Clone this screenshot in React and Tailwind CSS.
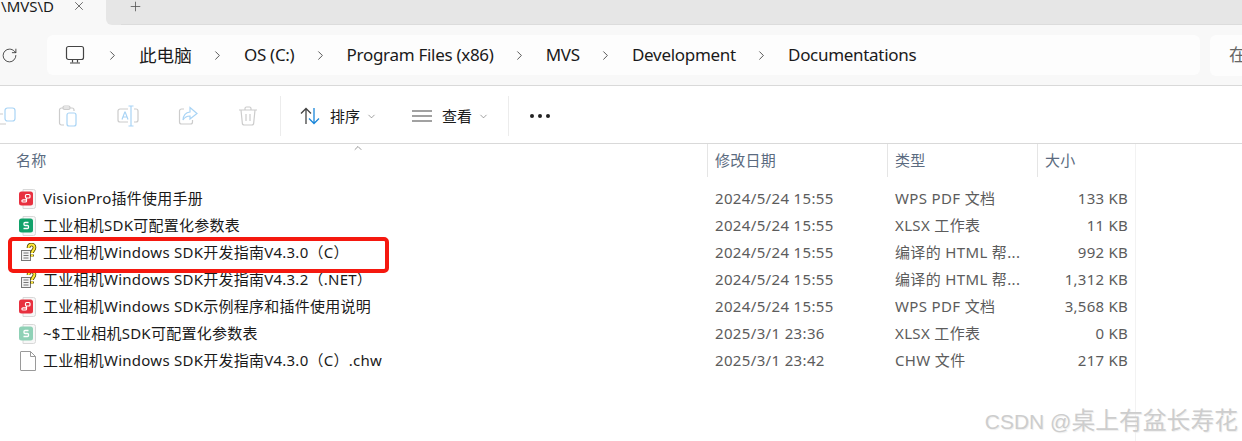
import { ChevronRight, ChevronDown, ChevronUp, X, Plus, RotateCw } from 'lucide-react';

const FONT = '"Noto Sans", "Noto Sans CJK SC", sans-serif';

const crumbs = ['OS (C:)', 'Program Files (x86)', 'MVS', 'Development', 'Documentations'];

const files = [
  { icon: 'pdf', name: 'VisionPro插件使用手册', date: '2024/5/24 15:55', type: 'WPS PDF 文档', size: '133 KB' },
  { icon: 'xlsx', name: '工业相机SDK可配置化参数表', date: '2024/5/24 15:55', type: 'XLSX 工作表', size: '11 KB' },
  { icon: 'chm', name: '工业相机Windows SDK开发指南V4.3.0（C）', date: '2024/5/24 15:55', type: '编译的 HTML 帮...', size: '992 KB' },
  { icon: 'chm', name: '工业相机Windows SDK开发指南V4.3.2（.NET）', date: '2024/5/24 15:55', type: '编译的 HTML 帮...', size: '1,312 KB' },
  { icon: 'pdf', name: '工业相机Windows SDK示例程序和插件使用说明', date: '2024/5/24 15:55', type: 'WPS PDF 文档', size: '3,568 KB' },
  { icon: 'temp', name: '~$工业相机SDK可配置化参数表', date: '2025/3/1 23:36', type: 'XLSX 工作表', size: '0 KB' },
  { icon: 'blank', name: '工业相机Windows SDK开发指南V4.3.0（C）.chw', date: '2025/3/1 23:42', type: 'CHW 文件', size: '217 KB' },
];

function Monitor() {
  return (
    <svg width="20" height="20" viewBox="0 0 20 20" fill="none" stroke="#444" strokeWidth="1.2">
      <rect x="1.5" y="1.5" width="17" height="13" rx="2" />
      <path d="M7.5 15v2.2M12.5 15v2.2M5 18h10" />
    </svg>
  );
}

function CopyIcon() {
  return (
    <svg width="20" height="20" viewBox="0 0 20 20" fill="none" strokeWidth="1.2" className="shrink-0">
      <path d="M8 18H2a2 2 0 0 1-2-2V8M2 8h3" stroke="#ccc" />
      <rect x="7" y="2" width="10" height="13" rx="2.5" stroke="#a9d4f5" />
    </svg>
  );
}

function PasteIcon() {
  return (
    <svg width="20" height="22" viewBox="0 0 20 22" fill="none" strokeWidth="1.2">
      <path d="M6 20H3.5A2 2 0 0 1 1.500 18V5A2 2 0 0 1 3.500 3H14A2 2 0 0 1 16 5V6" stroke="#ccc" />
      <rect x="5" y="1" width="7" height="3.500" rx="1.500" stroke="#ccc" />
      <rect x="9" y="8" width="9" height="13" rx="2" stroke="#a9d4f5" />
    </svg>
  );
}

function RenameIcon() {
  return (
    <svg width="22" height="22" viewBox="0 0 22 22" fill="none" strokeWidth="1.2">
      <path d="M11 4H3a2 2 0 0 0-2 2v9a2 2 0 0 0 2 2h8M17 4h2a2 2 0 0 1 2 2v9a2 2 0 0 1-2 2h-2" stroke="#ccc" />
      <path d="M11.500 1h5M14 1v20M11.500 21h5M5 14.500l2.800-7.500h.4l2.800 7.500M6 12h4" stroke="#a9d4f5" />
    </svg>
  );
}

function ShareIcon() {
  return (
    <svg width="20" height="20" viewBox="0 0 20 20" fill="none" strokeWidth="1.2">
      <path d="M6 3H3.500a2 2 0 0 0-2 2v11a2 2 0 0 0 2 2h9a2 2 0 0 0 2-2v-2" stroke="#ccc" />
      <path d="M12 1.500l7 6-7 5.500V10c-3.500 0-5.500 1.500-7 4 .3-4.500 3-7.500 7-8z" stroke="#a9d4f5" />
    </svg>
  );
}

function TrashIcon() {
  return (
    <svg width="20" height="20" viewBox="0 0 20 20" fill="none" stroke="#ccc" strokeWidth="1.2">
      <path d="M1 4h18M7 4V2.500A1.500 1.500 0 0 1 8.500 1h3A1.500 1.500 0 0 1 13 2.500V4M3 4l1.300 13a2 2 0 0 0 2 2h7.400a2 2 0 0 0 2-2L17 4M8 8v7M12 8v7" />
    </svg>
  );
}

function SortIcon() {
  return (
    <svg width="20" height="18" viewBox="0 0 20 18" fill="none" strokeWidth="1.3">
      <path d="M6 17V1.500M1 6.500l5-5 5 5" stroke="#444" />
      <path d="M14 1v15.500M9 11.500l5 5 5-5" stroke="#1a86d9" />
    </svg>
  );
}

function ListIcon() {
  return (
    <svg width="20" height="14" viewBox="0 0 20 14" fill="none" stroke="#444" strokeWidth="1.2">
      <path d="M0 2h20M0 7h20M0 12h20" />
    </svg>
  );
}

function FileIcon({ kind }) {
  if (kind === 'blank') {
    return (
      <svg width="18" height="20" viewBox="0 0 18 20" fill="none" stroke="#9a9a9a" strokeWidth="1">
        <path d="M2 .5h9.500L16.500 5.500V19.500H2a.5 .5 0 0 1-.5-.5V1a.5 .5 0 0 1 .5-.5z" fill="#fff" />
        <path d="M11.500 .5v5h5" />
      </svg>
    );
  }
  if (kind === 'chm') {
    const mark = 'M9.500 5C9.500 2.800 10.800 1.500 12.500 1.500S15.500 2.800 15.500 4.500C15.500 7 13 7.500 13 10M13 11.500v2';
    return (
      <svg width="18" height="20" viewBox="0 0 18 20" fill="none">
        <rect x="2.500" y="7.500" width="9" height="10" fill="#f2f2f2" stroke="#777" />
        <path d="M4.500 10h5M4.500 12.500h5M4.500 15h5" stroke="#777" />
        <path d={mark} stroke="#4a3f00" strokeWidth="3.600" />
        <path d={mark} stroke="#ffe93b" strokeWidth="2" />
      </svg>
    );
  }
  const color = kind === 'pdf' ? '#e8303f' : kind === 'xlsx' ? '#11a26a' : '#8fd1b6';
  return (
    <svg width="18" height="20" viewBox="0 0 18 20" fill="none">
      <path d="M4 .5h10.500a2 2 0 0 1 2 2v15a2 2 0 0 1-2 2H4z" fill="#f7f7f7" stroke="#d8d8d8" />
      <rect x="0" y="2.500" width="14" height="14" rx="2.500" fill={color} />
      {kind === 'pdf' ? (
        <>
          <rect x="6.500" y="5.500" width="4.500" height="3.500" rx="1" stroke="#fff" strokeWidth="1.200" />
          <path d="M7 10.800H4a1 1 0 0 0 0 2.200h2.500a1 1 0 0 0 1-1V9" stroke="#fff" strokeWidth="1.200" />
        </>
      ) : (
        <path d="M9.500 6.500H6a1 1 0 0 0-1 1v1a1 1 0 0 0 1 1h2.500a1 1 0 0 1 1 1v1a1 1 0 0 1-1 1H4.500" stroke="#fff" strokeWidth="1.300" />
      )}
    </svg>
  );
}

function ToolBtn({ children }) {
  return <div className="w-[60px] h-[24px] flex items-center justify-center shrink-0">{children}</div>;
}

export default function App() {
  return (
    <div className="relative h-[441px] w-[1242px] overflow-hidden bg-white" style={{ fontFamily: FONT }}>
      {/* Tab strip */}
      <div className="h-[25px] flex bg-[#e6e6e6] border-b border-[#dcdcdc]">
        <div className="w-[106px] h-[25px] shrink-0 bg-[#f8f8f8] flex items-center justify-end overflow-hidden pr-[20px] gap-[18px] text-[15px] text-[#1a1a1a] whitespace-nowrap">
          <span className="-mt-[13px]">\MVS\D</span>
          <X size={14} strokeWidth={1.2} color="#333" className="-mt-[13px] shrink-0" />
        </div>
        <div className="w-[15px] h-[25px] bg-[#f8f8f8] shrink-0">
          <div className="w-full h-full bg-[#e6e6e6] rounded-bl-[6px]" />
        </div>
        <Plus size={15} strokeWidth={1.3} color="#555" className="ml-[7px] mt-[-1px]" />
      </div>

      {/* Address row */}
      <div className="h-[61px] bg-[#f8f8f8] border-b border-[#d9d9d9] flex items-center">
        <div className="w-[47px] shrink-0 flex">
          <RotateCw size={17} strokeWidth={1.2} color="#333" className="ml-[1px]" />
        </div>
        <div className="w-[1153px] h-[40px] shrink-0 bg-[#fdfdfd] rounded-[6px] flex items-center pl-[18px] text-[17px] tracking-[-0.3px] text-[#1a1a1a] whitespace-nowrap">
          <Monitor />
          <ChevronRight size={15} strokeWidth={1.3} color="#333" className="ml-[20px] mr-[19px]" />
          <span className="text-[17.600px] tracking-normal">此电脑</span>
          {crumbs.map((c) => (
            <div key={c} className="flex items-center">
              <ChevronRight size={15} strokeWidth={1.3} color="#333" className="mx-[18.600px]" />
              <span>{c}</span>
            </div>
          ))}
        </div>
        <div className="ml-[10px] flex-1 h-[41px] bg-[#fdfdfd] rounded-l-[6px] flex items-center pl-[19px] text-[17px] text-[#666]">在</div>
      </div>

      {/* Command bar */}
      <div className="h-[58px] pt-[3px] border-b border-[#d9d9d9] flex items-center text-[15px] text-[#1a1a1a]">
        <div className="flex items-center -ml-[22px]">
          <ToolBtn><CopyIcon /></ToolBtn>
          <ToolBtn><PasteIcon /></ToolBtn>
          <ToolBtn><RenameIcon /></ToolBtn>
          <ToolBtn><ShareIcon /></ToolBtn>
          <ToolBtn><TrashIcon /></ToolBtn>
        </div>
        <div className="ml-[2px] w-px h-[40px] bg-[#ececec]" />
        <div className="ml-[19px] flex items-center">
          <SortIcon />
          <span className="ml-[10px]">排序</span>
          <ChevronDown size={11} strokeWidth={1.2} color="#555" className="ml-[6px]" />
        </div>
        <div className="ml-[35px] flex items-center">
          <ListIcon />
          <span className="ml-[10px]">查看</span>
          <ChevronDown size={11} strokeWidth={1.2} color="#555" className="ml-[6px]" />
        </div>
        <div className="ml-[19px] w-px h-[40px] bg-[#ececec]" />
        <div className="ml-[21px] flex gap-[4px]">
          <span className="w-[4px] h-[4px] rounded-full bg-[#222]" />
          <span className="w-[4px] h-[4px] rounded-full bg-[#222]" />
          <span className="w-[4px] h-[4px] rounded-full bg-[#222]" />
        </div>
      </div>

      {/* File list */}
      <div className="w-[1136px] h-[297px] border-r border-[#f2f2f2] text-[15px] tracking-[0.25px]">
        <div className="h-[33px] grid grid-cols-[708px_180px_150px_97px] text-[#5b6b80]">
          <div className="border-r border-[#e5e5e5] pl-[16px] pt-[5px]">名称</div>
          <div className="border-r border-[#e5e5e5] pl-[7px] pt-[5px]">修改日期</div>
          <div className="border-r border-[#e5e5e5] pl-[7px] pt-[5px]">类型</div>
          <div className="pl-[7px] pt-[5px]">大小</div>
        </div>
        <div className="pt-[8px]">
          {files.map((f) => (
            <div key={f.name} className="h-[27px] grid grid-cols-[708px_180px_150px_97px] items-center whitespace-nowrap">
              <div className="flex items-center pl-[19px] text-[#1a1a1a]">
                <div className="w-[24px] shrink-0 flex"><FileIcon kind={f.icon} /></div>
                <span>{f.name}</span>
              </div>
              <div className="pl-[7px] text-[#5c5c5c] tracking-[0.35px]">{f.date}</div>
              <div className="pl-[7px] text-[#5c5c5c] tracking-[0.35px]">{f.type}</div>
              <div className="pr-[7px] text-right text-[#5c5c5c]">{f.size}</div>
            </div>
          ))}
        </div>
      </div>

      {/* Overlays: sort caret, red annotation box, watermark */}
      <ChevronUp size={12} strokeWidth={1.2} color="#555" className="absolute left-[352px] top-[142px]" />
      <div className="absolute left-[8px] top-[237px] w-[381px] h-[36px] border-[4px] border-[#f5180f] rounded-[5px]" />
      <div
        className="absolute right-[4px] top-[407px] text-[21px] leading-[28px] text-[#cdcdcd] whitespace-nowrap [text-shadow:1px_1px_1px_#eeeeee]"
        style={{ fontFamily: '"Liberation Sans", "Noto Sans CJK SC", sans-serif' }}
      >
        CSDN @<span className="text-[23.800px]">桌上有盆长寿花</span>
      </div>
    </div>
  );
}
